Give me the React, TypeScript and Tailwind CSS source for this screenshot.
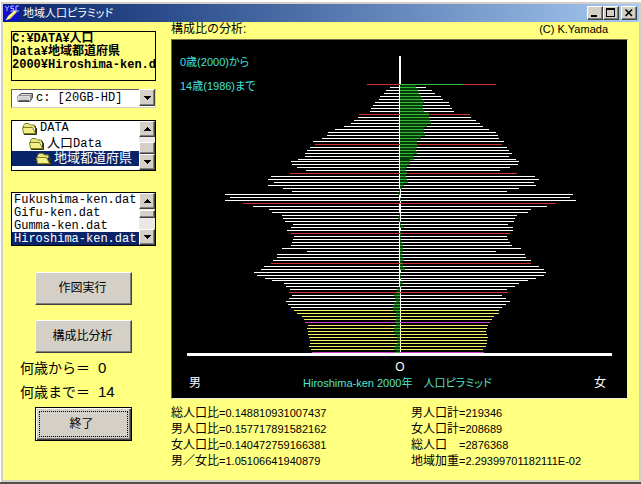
import React, { useState } from 'react';

// number of pixels per age, oldest (90+) first
const male = [
  33, 10, 14, 16, 20, 21, 25, 27, 29, 30,
  41, 42, 46, 49, 56, 65, 72, 73, 78, 87,
  85, 90, 93, 95, 95, 102, 109, 108, 103, 94,
  110, 129, 132, 126, 132, 117, 108, 175, 170, 175,
  157, 147, 131, 128, 118, 117, 115, 107, 109, 113,
  109, 106, 107, 108, 109, 118, 93, 123, 123, 127,
  129, 136, 139, 146, 143, 135, 128, 116, 114, 110,
  111, 108, 111, 114, 112, 109, 106, 103, 98, 96,
  95, 92, 93, 92, 92, 91, 90, 90, 91, 89, 88,
];

const female = [
  96, 26, 32, 35, 41, 43, 49, 50, 52, 54,
  70, 71, 76, 80, 83, 89, 96, 98, 99, 104,
  102, 107, 109, 112, 109, 116, 119, 118, 110, 100,
  117, 135, 139, 134, 136, 119, 107, 173, 170, 176,
  156, 147, 131, 128, 117, 115, 114, 108, 113, 113,
  110, 107, 108, 110, 112, 121, 96, 125, 126, 131,
  131, 139, 144, 146, 144, 136, 128, 119, 115, 107,
  108, 102, 106, 110, 106, 102, 99, 99, 94, 92,
  90, 88, 87, 86, 87, 88, 87, 87, 86, 83, 84,
];

const CENTER = 228;
const TOP = 44;

const folders = [
  { name: 'DATA', indent: 'pl-[10px]' },
  { name: '人口Data', indent: 'pl-[17px]' },
  { name: '地域都道府県', indent: 'pl-6' },
];

const files = ['Fukushima-ken.dat', 'Gifu-ken.dat', 'Gumma-ken.dat', 'Hiroshima-ken.dat'];

const stats = [
  ['総人口比', '0.148810931007437'],
  ['男人口計', '219346'],
  ['男人口比', '0.157717891582162'],
  ['女人口計', '208689'],
  ['女人口比', '0.140472759166381'],
  ['総人口\u3000', '2876368'],
  ['男／女比', '1.05106641940879'],
  ['地域加重', '2.29399701182111E-02'],
];

const raised = 'bg-[#d4d0c8] border border-t-white border-l-white border-r-[#404040] border-b-[#404040] shadow-[inset_-1px_-1px_0_#808080]';
const mono = "font-['Liberation_Mono','Noto_Sans_CJK_JP',monospace] text-[12px]";

function barColor(age: number) {
  if (age % 10 === 0) return age < 15 ? '#c840c8' : '#d03030';
  return age < 15 ? '#f0f060' : '#ffffff';
}

function rowY(i: number) {
  return TOP + i * 3 - (i >= 26 ? 1 : 0) - (i >= 66 ? 1 : 0);
}

function Pyramid() {
  return (
    <svg viewBox="0 0 455 358" className="block w-full bg-black" role="img" aria-label="人口ピラミッド">
      <g shapeRendering="crispEdges">
        <rect x={CENTER - 1} y="16" width="2" height="297" fill="#fff" />
        {male.map((m, i) => {
          const f = female[i];
          const diff = Math.abs(f - m);
          const gx = f >= m ? CENTER : CENTER - diff;
          const y = rowY(i);
          return (
            <g key={i}>
              {i > 0 && <rect x={gx} y={y - 2} width={diff} height="3" fill="#043c08" />}
              <rect x={CENTER - m} y={y} width={m + f} height="1" fill={barColor(90 - i)} />
              <rect x={gx} y={y} width={i === 0 ? 63 : diff} height="1" fill="#38b838" />
            </g>
          );
        })}
        <rect x="15" y="313" width="425" height="3" fill="#fff" />
      </g>
      <g className="text-[12px] [font-feature-settings:'palt']" fill="#40e0d8">
        <g className="text-[11px]">
          <text x="8" y="26">0歳(2000)から</text>
          <text x="8" y="50">14歳(1986)まで</text>
          <text x="131" y="347" fill="#58e0c8" xmlSpace="preserve">{'Hiroshima-ken 2000年\u3000人口ピラミッド'}</text>
        </g>
        <text x="17" y="347" fill="#fff">男</text>
        <text x="422" y="347" fill="#fff">女</text>
        <text x={CENTER} y="331" fill="#fff" textAnchor="middle">O</text>
      </g>
    </svg>
  );
}

// kanji stand a bit larger than the latin letters in the folder list
function Mixed({ text }: { text: string }) {
  return (
    <span className="pt-px">
      {text.split(/([\u4e00-\u9fff]+)/).map((part, i) => (
        i % 2 ? <span key={i} className="text-[13px]">{part}</span> : part
      ))}
    </span>
  );
}

function Arrow({ up }: { up?: boolean }) {
  return (
    <svg viewBox="0 0 7 4" className="w-[7px] h-1" shapeRendering="crispEdges">
      <polygon points={up ? '0,4 3.5,0 7,4' : '0,0 7,0 3.5,4'} fill="#000" />
    </svg>
  );
}

function ScrollBar({ thumb }: { thumb: string }) {
  return (
    <div className="w-4 shrink-0 flex flex-col bg-[#ebe9e4]">
      <button aria-label="上へ" className={`h-4 flex items-center justify-center ${raised}`}><Arrow up /></button>
      <div className="flex-1 flex flex-col">
        <div className={`${thumb} ${raised}`} />
      </div>
      <button aria-label="下へ" className={`h-4 flex items-center justify-center ${raised}`}><Arrow /></button>
    </div>
  );
}

function FolderIcon() {
  return (
    <svg viewBox="0 0 16 13" className="w-4 h-[13px] shrink-0">
      <path d="M1.5 11.5V3.5L3 1.5H7L8.5 3H12.5V5.5" fill="#e8e480" stroke="#808020" />
      <path d="M13.5 4V12" stroke="#404020" />
      <path d="M1.5 11.5L.5 5.5H10.5L13.5 11.5Z" fill="#f4f088" stroke="#808020" />
      <path d="M2 12.5H14.5V6" fill="none" stroke="#303018" />
    </svg>
  );
}

function Button({ children, focused }: { children: React.ReactNode; focused?: boolean }) {
  if (focused) {
    return (
      <button className="w-[97px] h-[34px] border border-black bg-[#d4d0c8] shadow-[inset_1px_1px_0_#fff,inset_-1px_-1px_0_#404040,inset_-2px_-2px_0_#808080] p-[3px]">
        <span className="flex h-full items-center justify-center border border-dotted border-black pr-1">{children}</span>
      </button>
    );
  }
  return <button className={`w-[97px] h-[33px] pr-[2px] ${raised}`}>{children}</button>;
}

function TitleBar() {
  return (
    <div className="h-[18px] flex items-center pl-px pr-[2px] bg-linear-to-r from-[#0a246a] to-[#a6caf0]">
      <svg viewBox="0 0 16 16" className="w-4 h-4 mr-[3px]">
        <rect width="16" height="16" fill="#1010c8" />
        <path d="M1 1L3 3.5L5 1M3 3.5V6M10 1H7V3.5H9.500V6H6.500M15 1H12V6H15" fill="none" stroke="#b8c8ff" />
        <path d="M2 15L4 11L11 5L13 7L6 14Z" fill="#f0e858" />
        <path d="M2 15L11 6" stroke="#fff" />
      </svg>
      <h1 className="flex-1 text-white text-[11px] leading-4 [font-feature-settings:'palt']">地域人口ピラミッド</h1>
      <button aria-label="最小化" className={`w-4 h-[14px] ${raised}`}>
        <svg viewBox="0 0 14 12" shapeRendering="crispEdges"><rect x="3" y="8" width="6" height="2" /></svg>
      </button>
      <button aria-label="最大化" className={`w-4 h-[14px] mr-[2px] ${raised}`}>
        <svg viewBox="0 0 14 12" shapeRendering="crispEdges"><path d="M2 1H11V10H2ZM3 3V9H10V3Z" fillRule="evenodd" /></svg>
      </button>
      <button aria-label="閉じる" className={`w-4 h-[14px] ${raised}`}>
        <svg viewBox="0 0 14 12"><path d="M3.500 2.500L10 9M10 2.500L3.500 9" stroke="#000" strokeWidth="1.600" /></svg>
      </button>
    </div>
  );
}

export default function App() {
  const [folder, setFolder] = useState('地域都道府県');
  const [file, setFile] = useState('Hiroshima-ken.dat');

  return (
    <div className="min-h-screen flex flex-col bg-[#d4d0c8] p-[2px] pt-1 pl-[3px] border-b-2 border-[#505050] shadow-[inset_1px_2px_0_#fff] text-black text-[12px] font-['Liberation_Sans','Noto_Sans_CJK_JP',sans-serif]">
      <TitleBar />
      <main className="flex-1 flex bg-[#ffff80] pl-2 pr-[11px]">
        <div className="w-[145px] mr-[15px] shrink-0 pt-[9px] flex flex-col">
          <div className={`h-[50px] border border-black whitespace-nowrap font-bold leading-[13px] pt-px ${mono}`}>
            C:¥DATA¥人口<br />Data¥地域都道府県<br />2000¥Hiroshima-ken.d
          </div>

          <div className="relative mt-[7px]">
            <select aria-label="ドライブ" className={`appearance-none w-full h-[19px] pl-6 bg-white border border-t-[#606060] border-l-[#606060] border-[#d4d0c8] leading-4 ${mono}`}>
              <option>c: [20GB-HD]</option>
            </select>
            <svg viewBox="0 0 16 9" className="absolute left-[6px] top-[5px] w-4 h-[9px] pointer-events-none">
              <path d="M1 3.500L4 .5H15.500V4.500L13 8.500H1Z" fill="#909090" stroke="#505050" />
              <path d="M1.500 3.500H12.500V7.500H1.500ZM4 1.500H14" fill="#d0d0d0" stroke="#e0e0e0" />
              <path d="M2 7.500H12" stroke="#606060" />
            </svg>
            <span className={`absolute right-px top-px w-4 h-[17px] flex items-center justify-center pointer-events-none ${raised}`}>
              <Arrow />
            </span>
          </div>

          <div className="mt-3 h-[51px] flex border border-black bg-white">
            <ul role="listbox" aria-label="フォルダ" className={`flex-1 min-w-0 whitespace-nowrap ${mono}`}>
              {folders.map((f) => (
                <li
                  key={f.name}
                  role="option"
                  aria-selected={folder === f.name}
                  onClick={() => setFolder(f.name)}
                  className={`h-[15px] flex items-center gap-[2px] leading-[15px] ${f.indent} ${folder === f.name ? 'bg-[#0a246a] text-white' : ''}`}
                >
                  <FolderIcon />
                  <Mixed text={f.name} />
                </li>
              ))}
            </ul>
            <ScrollBar thumb="mt-[5px] h-3" />
          </div>

          <div className="mt-[21px] h-[54px] flex border border-black bg-white">
            <ul role="listbox" aria-label="ファイル" className={`flex-1 min-w-0 whitespace-nowrap ${mono}`}>
              {files.map((name) => (
                <li
                  key={name}
                  role="option"
                  aria-selected={file === name}
                  onClick={() => setFile(name)}
                  className={`h-[13px] pl-[2px] leading-[14px] ${file === name ? 'bg-[#0a246a] text-white' : ''}`}
                >
                  {name}
                </li>
              ))}
            </ul>
            <ScrollBar thumb="mt-px h-2" />
          </div>

          <div className="mt-[26px] pl-6 flex flex-col gap-[15px]">
            <Button>作図実行</Button>
            <Button>構成比分析</Button>
          </div>
          <dl className="my-[3px] pl-[9px] grid grid-cols-[78px_1fr] text-[14px] leading-6">
            <dt>何歳から＝</dt>
            <dd className="text-[15px]">0</dd>
            <dt>何歳まで＝</dt>
            <dd className="text-[15px]">14</dd>
          </dl>
          <div className="pl-6">
            <Button focused>終了</Button>
          </div>
        </div>

        <div className="flex-1 min-w-0">
          <div className="h-[17px] flex justify-between pr-5 leading-[14px]">
            <h2>構成比の分析:</h2>
            <span className="text-[11px]">(C) K.Yamada</span>
          </div>
          <div className="border border-t-[#716f50] border-l-[#716f50] border-[#f0ece0]">
            <Pyramid />
          </div>
          <div className="mt-[6px] grid grid-cols-[240px_1fr] leading-4 whitespace-nowrap">
            {stats.map(([label, value]) => (
              <p key={label}>{label}<span className="text-[11px]">={value}</span></p>
            ))}
          </div>
        </div>
      </main>
    </div>
  );
}
